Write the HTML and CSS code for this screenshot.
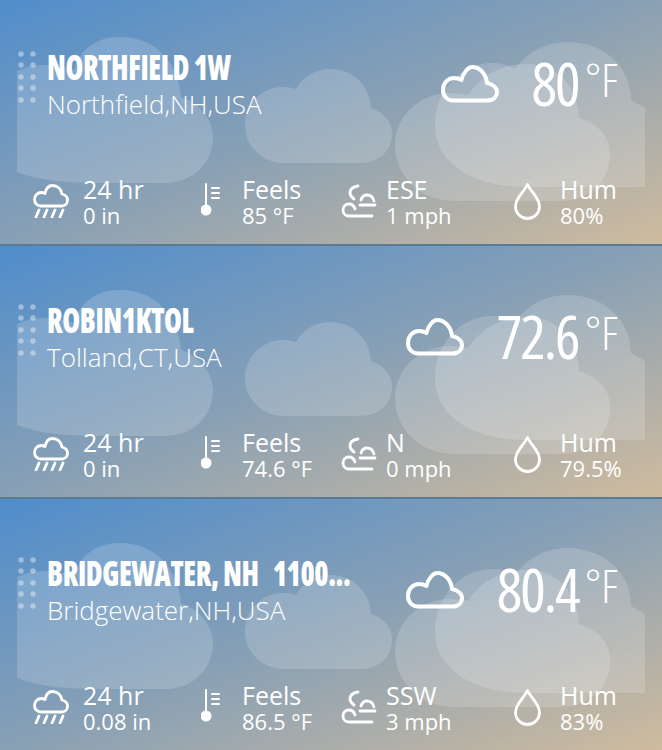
FILE: index.html
```html
<!DOCTYPE html>
<html lang="en">
<head>
    <meta charset="UTF-8">
    <meta name="viewport" content="width=device-width, initial-scale=1.0">
    <title>Weather Stations</title>
    <link rel="stylesheet" href="styles.css">
</head>
<body>

<svg class="sprites" width="0" height="0" aria-hidden="true">
    <symbol id="card-art" viewBox="0 -7 662 253">
        <g fill="#fff" fill-opacity="0.17">
            <path d="M17 172V71Q28 65 44 65Q60 65 74 70C80 50 95 37 120 37C155 37 178 62 181 97C200 104 213 120 213 137C213 163 193 183 165 183H105C70 183 40 181 17 172Z"/>
            <path d="M283 163C262 163 245 146 245 125C245 104 262 87 283 87Q290 87 296 89C303 76 316 69 331 69C353 69 370 86 371 108C384 112 392 122 392 134C392 151 379 163 360 163Z"/>
            <path d="M455 201C420 201 395 176 395 145C395 116 420 93 450 93Q460 93 468 95C482 74 503 64 527 64C556 64 578 85 579 118C598 124 610 136 610 154C610 182 590 201 560 201Z"/>
            <path d="M645 187H525C475 187 435 165 435 125C435 91 460 63 492 63Q505 63 515 69C527 52 546 42 568 42C604 42 631 67 631 100L645 108Z"/>
        </g>
        <g fill="#fff" fill-opacity="0.4">
            <circle cx="21" cy="54" r="2.7"/><circle cx="33" cy="54" r="2.7"/>
            <circle cx="21" cy="65" r="2.7"/><circle cx="33" cy="65" r="2.7"/>
            <circle cx="21" cy="77" r="2.7"/><circle cx="33" cy="77" r="2.7"/>
            <circle cx="21" cy="88" r="2.7"/><circle cx="33" cy="88" r="2.7"/>
            <circle cx="21" cy="100" r="2.7"/><circle cx="33" cy="100" r="2.7"/>
        </g>
    </symbol>
    <symbol id="icon-cloud" viewBox="0 0 58 38">
        <path d="M12 35.500C6 35.500 2 31 2 25C2 18 7 13 13 13Q17 13 20.500 15C22 7 28 2 31 2C39 2 45 9 46 18C52 19 56 23 56 27C56 32 52 35.500 46 35.500Z"/>
    </symbol>
    <symbol id="icon-rain" viewBox="0 0 36 34">
        <path d="M8 22C4 22 1.500 19 1.500 15.500C1.500 11.500 4.500 8.500 8.500 8.500Q10 8.500 12 9.500C13 4.500 16 1.500 19.500 1.500C24.500 1.500 28 5 29 10C32.500 11 34.500 13 34.500 16C34.500 19.500 32 22 29 22Z"/>
        <path d="M6 26L3 33M14 26L11 33M22 26L19 33M30 26L27 33"/>
    </symbol>
    <symbol id="icon-thermo" viewBox="0 0 20 36">
        <path d="M5 1V26M11 5H18M11 10H18M11 15H18" stroke-width="2"/>
        <circle fill="#fff" stroke="none" cx="5" cy="27" r="5.500"/>
    </symbol>
    <symbol id="icon-wind" viewBox="0 0 37 34">
        <path d="M17 2C11 3 9 6 9 9C9 11 10 13 13 15"/>
        <path d="M33 17C32 13 29 11 26 11C23 11 21 13 20 16"/>
        <path d="M19 21H34"/>
        <path d="M14 25C13 22 11 20 8 20C4 20 2 23 2 26C2 30 5 32 8 32H31"/>
    </symbol>
    <symbol id="icon-drop" viewBox="0 0 27 37">
        <path d="M13.500 1.500C10 9 1.500 15 1.500 23.500A12 12 0 0 0 25.500 23.500C25.500 15 17 9 13.500 1.500Z"/>
    </symbol>
</svg>

<div class="station-list">

    <div class="station-card">
        <svg class="card-art"><use href="#card-art"/></svg>
        <div class="card-top">
            <div class="station-name">
                <h2>NORTHFIELD 1W</h2>
                <p>Northfield,NH,USA</p>
            </div>
            <div class="current">
                <svg class="icon current-icon"><use href="#icon-cloud"/></svg>
                <div class="temp">80 <span>°F</span></div>
            </div>
        </div>
        <div class="stats">
            <div class="stat stat-rain">
                <svg class="icon"><use href="#icon-rain"/></svg>
                <div class="stat-text"><strong>24 hr</strong><span>0 in</span></div>
            </div>
            <div class="stat stat-feels">
                <svg class="icon"><use href="#icon-thermo"/></svg>
                <div class="stat-text"><strong>Feels</strong><span>85 °F</span></div>
            </div>
            <div class="stat stat-wind">
                <svg class="icon"><use href="#icon-wind"/></svg>
                <div class="stat-text"><strong>ESE</strong><span>1 mph</span></div>
            </div>
            <div class="stat stat-hum">
                <svg class="icon"><use href="#icon-drop"/></svg>
                <div class="stat-text"><strong>Hum</strong><span>80%</span></div>
            </div>
        </div>
    </div>

    <div class="station-card">
        <svg class="card-art"><use href="#card-art"/></svg>
        <div class="card-top">
            <div class="station-name">
                <h2>ROBIN1KTOL</h2>
                <p>Tolland,CT,USA</p>
            </div>
            <div class="current">
                <svg class="icon current-icon"><use href="#icon-cloud"/></svg>
                <div class="temp">72.6 <span>°F</span></div>
            </div>
        </div>
        <div class="stats">
            <div class="stat stat-rain">
                <svg class="icon"><use href="#icon-rain"/></svg>
                <div class="stat-text"><strong>24 hr</strong><span>0 in</span></div>
            </div>
            <div class="stat stat-feels">
                <svg class="icon"><use href="#icon-thermo"/></svg>
                <div class="stat-text"><strong>Feels</strong><span>74.6 °F</span></div>
            </div>
            <div class="stat stat-wind">
                <svg class="icon"><use href="#icon-wind"/></svg>
                <div class="stat-text"><strong>N</strong><span>0 mph</span></div>
            </div>
            <div class="stat stat-hum">
                <svg class="icon"><use href="#icon-drop"/></svg>
                <div class="stat-text"><strong>Hum</strong><span>79.5%</span></div>
            </div>
        </div>
    </div>

    <div class="station-card">
        <svg class="card-art"><use href="#card-art"/></svg>
        <div class="card-top">
            <div class="station-name">
                <h2>BRIDGEWATER, NH&nbsp;&nbsp; 1100...</h2>
                <p>Bridgewater,NH,USA</p>
            </div>
            <div class="current">
                <svg class="icon current-icon"><use href="#icon-cloud"/></svg>
                <div class="temp">80.4 <span>°F</span></div>
            </div>
        </div>
        <div class="stats">
            <div class="stat stat-rain">
                <svg class="icon"><use href="#icon-rain"/></svg>
                <div class="stat-text"><strong>24 hr</strong><span>0.08 in</span></div>
            </div>
            <div class="stat stat-feels">
                <svg class="icon"><use href="#icon-thermo"/></svg>
                <div class="stat-text"><strong>Feels</strong><span>86.5 °F</span></div>
            </div>
            <div class="stat stat-wind">
                <svg class="icon"><use href="#icon-wind"/></svg>
                <div class="stat-text"><strong>SSW</strong><span>3 mph</span></div>
            </div>
            <div class="stat stat-hum">
                <svg class="icon"><use href="#icon-drop"/></svg>
                <div class="stat-text"><strong>Hum</strong><span>83%</span></div>
            </div>
        </div>
    </div>

</div>

</body>
</html>
```

FILE: styles.css
```css
html, body {
    height: 100%;
    overflow: hidden;
}

body {
    margin: 0;
    padding: 0;
    font-family: "Open Sans", "Noto Sans", sans-serif;
    color: white;
    background-color: #5a8cc0;
}

.sprites {
    position: absolute;
}

.station-list {
    margin-top: -7px;
}

.station-card {
    position: relative;
    box-sizing: border-box;
    height: 253px;
    padding: 54px 42px 0 47px;
    background: linear-gradient(to bottom right, #4f8dcc 0%, #88a0b5 50%, #cfbb9e 100%);
    border-bottom: 2px solid #5d7a93;
}

.card-art {
    position: absolute;
    top: 0;
    left: 0;
    width: 662px;
    height: 253px;
}

.icon {
    display: block;
    fill: none;
    stroke: white;
    stroke-width: 2.8;
    stroke-linecap: round;
    stroke-linejoin: round;
    flex-shrink: 0;
}

.card-top {
    position: relative;
    display: flex;
    justify-content: space-between;
    height: 128px;
}

.station-name {
    flex: 1;
    min-width: 0;
    white-space: nowrap;
}

.station-name h2 {
    margin: 0;
    font-size: 36px;
    line-height: 40px;
    font-weight: 800;
    font-stretch: 75%;
    letter-spacing: -0.5px;
    transform: scaleX(0.8);
    transform-origin: left center;
}

.station-name p {
    margin: 0;
    font-size: 26px;
    line-height: 34px;
    font-weight: 300;
}

.current {
    display: flex;
    align-items: flex-start;
    flex-shrink: 0;
    gap: 33px;
    white-space: nowrap;
}

.current-icon {
    width: 58px;
    height: 38px;
    margin-top: 18px;
    stroke-width: 4;
}

.temp {
    margin: 4px 2px 0 0;
    font-size: 60px;
    line-height: 64px;
    font-weight: 400;
    font-stretch: 75%;
    letter-spacing: -2px;
    word-spacing: -3px;
}

.temp span {
    position: relative;
    top: -9px;
    font-size: 46px;
    font-weight: 300;
    letter-spacing: 0;
}

.stats {
    position: relative;
    display: grid;
    grid-template-columns: 168px 140px 173px 100px;
    margin-left: -14px;
}

.stat {
    display: flex;
    align-items: center;
}

.stat-text {
    display: flex;
    flex-direction: column;
}

.stat-text strong {
    font-size: 25px;
    line-height: 28px;
    font-weight: 400;
}

.stat-text span {
    font-size: 22px;
    line-height: 24px;
}

.stat-rain .icon {
    width: 36px;
    height: 34px;
    margin-right: 14px;
}

.stat-feels .icon {
    width: 20px;
    height: 36px;
    margin-right: 21px;
}

.stat-wind .icon {
    width: 37px;
    height: 34px;
    margin-right: 8px;
}

.stat-hum .icon {
    width: 27px;
    height: 37px;
    margin-right: 19px;
}
```
